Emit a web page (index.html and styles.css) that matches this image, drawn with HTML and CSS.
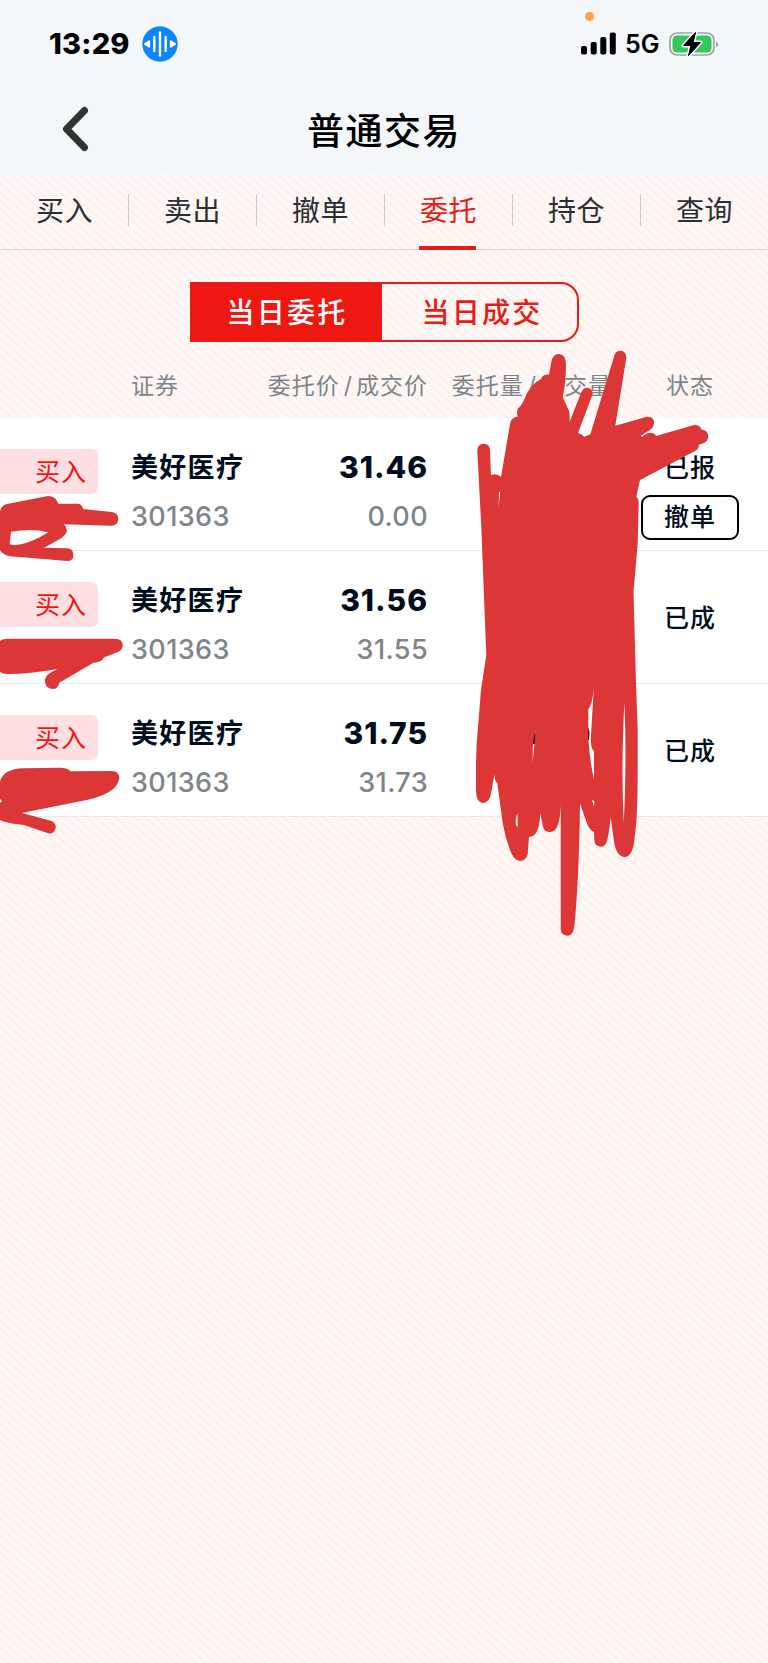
FILE: index.html
```html
<!DOCTYPE html>
<html lang="zh-CN">
<head>
<meta charset="UTF-8" />
<meta name="viewport" content="width=device-width, initial-scale=1" />
<title>普通交易</title>
<link rel="stylesheet" href="styles.css">
</head>
<body>

<div class="page">
  <header class="header">
    <div class="status-bar">
      <div class="status-left">
        <span class="time">13:29</span>
        <svg class="voice" viewBox="0 0 36 36">
          <circle cx="18" cy="18" r="17.7" fill="#0a84ff"/>
          <path d="M12.3 11v14M18 6.5v23M23.7 11v14" stroke="#fff" stroke-width="2.4" stroke-linecap="round"/>
          <path d="M2.8 18l4.500-2.800v5.600zM33.200 18l-4.500-2.800v5.600z" fill="#fff" stroke="#fff" stroke-width="1.800" stroke-linejoin="round"/>
        </svg>
      </div>
      <div class="status-right">
        <svg class="signal" viewBox="0 0 36 24">
          <rect x="0" y="14" width="6" height="8.500" rx="2"/>
          <rect x="9.700" y="10" width="6" height="12.500" rx="2"/>
          <rect x="19.300" y="5" width="6" height="17.500" rx="2"/>
          <rect x="28.800" y="0.500" width="6" height="22" rx="2"/>
        </svg>
        <span class="network">5G</span>
        <svg class="battery" viewBox="0 0 50 26">
          <rect x="1" y="2" width="44" height="22" rx="7" fill="none" stroke="#a0a4a8" stroke-width="1.700"/>
          <path d="M47 10.500q2.300 1 2.300 3t-2.300 3z" fill="#a0a4a8"/>
          <rect x="3.500" y="4.500" width="39" height="17" rx="4.500" fill="#34c759"/>
          <path d="M26.500 1.500L14.500 14.500h7.500L19.500 24.500L31.500 11.500h-7.500z" fill="#000" stroke="#f3f7fb" stroke-width="4" stroke-linejoin="round" paint-order="stroke"/>
          <path d="M26.500 1.500L14.500 14.500h7.500L19.500 24.500L31.500 11.500h-7.500z" fill="#000" stroke="#000" stroke-linejoin="round"/>
        </svg>
      </div>
      <i class="mic-dot"></i>
    </div>
    <div class="nav">
      <svg class="back" viewBox="0 0 28 46">
        <path d="M23.500 4.500L5.500 23l18 18.500" fill="none" stroke="#2d3338" stroke-width="7" stroke-linecap="round" stroke-linejoin="round"/>
      </svg>
      <h1>普通交易</h1>
    </div>
  </header>

  <nav class="tabs">
    <a class="tab">买入</a>
    <a class="tab">卖出</a>
    <a class="tab">撤单</a>
    <a class="tab active">委托</a>
    <a class="tab">持仓</a>
    <a class="tab">查询</a>
  </nav>

  <div class="switch">
    <button class="on">当日委托</button>
    <button>当日成交</button>
  </div>

  <div class="thead">
    <span class="c-name">证券</span>
    <span class="c-price">委托价<i>/</i>成交价</span>
    <span class="c-qty">委托量<i>/</i>成交量</span>
    <span class="c-state">状态</span>
  </div>

  <div class="list">
    <div class="row">
      <div class="c-side"><span class="badge">买入</span></div>
      <div class="c-name"><b>美好医疗</b><span>301363</span></div>
      <div class="c-price"><b>31.46</b><span>0.00</span></div>
      <div class="c-qty"></div>
      <div class="c-state pending"><span>已报</span><button class="cancel">撤单</button></div>
    </div>
    <div class="row">
      <div class="c-side"><span class="badge">买入</span></div>
      <div class="c-name"><b>美好医疗</b><span>301363</span></div>
      <div class="c-price"><b>31.56</b><span>31.55</span></div>
      <div class="c-qty"></div>
      <div class="c-state"><span>已成</span></div>
    </div>
    <div class="row">
      <div class="c-side"><span class="badge">买入</span></div>
      <div class="c-name"><b>美好医疗</b><span>301363</span></div>
      <div class="c-price"><b>31.75</b><span>31.73</span></div>
      <div class="c-qty"></div>
      <div class="c-state"><span>已成</span></div>
    </div>
  </div>

  <!-- hand-drawn marker over the private columns -->
  <svg class="marker" viewBox="0 0 768 1663">
    <path fill="#000d1c" d="M535.500 728L532 744h4zM588 727l1.500 5-.5 8h-1z"/>
    <path fill-rule="evenodd" d="M477.300 451Q477.500 443.700 483.700 443.700T490 451L491 475Q497 473 501 477L510 424Q511 417 518 416.500Q516 413 518 408.500Q522 405 524 400Q530 384 541 379Q543 374 549 374.700L551.300 362Q553 354 558.700 354Q566 354 566 365Q566 382 562.700 397L569 411Q570 415 569.500 422L581 393Q583 387.700 587 387.700Q592.700 388 592.700 394L578 433Q582 434 584.300 436.700L590.300 434.300L614 356.700Q615 350.700 620.300 350.700Q626.300 351 626.300 358L615.300 425.700L646 417Q653 416 654.300 422.300Q654 427 650 430L640.700 435.700L642 437Q646 432.700 651 432.700Q655 433 656 436L695 424.700Q700 425 701.500 429.500Q708 430 708.300 436.700Q708 443 699 444.500Q699 449 695 451L640 480L636.300 496.700Q638.700 498 638.700 503L637.700 543L633.500 591.700L636 683.300L637.700 730V773Q637.500 820 634.700 836.700Q633 856.700 624.700 857Q617 857 614.300 843.300L610.700 817.300Q609 834 606.700 842Q605 846.700 601 846.700Q594.300 846 594.300 840L594 832Q589 830 586 821L580 803.300Q579 880 574.300 926.700Q573 935.700 567.300 935.700Q561 935 560.700 929.300V805Q560 832 550.300 832Q544 832 543 826.700L540.300 813.300Q539 838 529 836.700L527.700 854Q526 861 520 861Q514 861 510 850Q505 837 502.700 823L497.300 783.300Q494 780 494.700 773.300L490.500 796Q488 803 483 803Q476 802 476 791V763L476.700 743L481 690L486.300 655L484 597L481.300 527Z
      M499 492L498.600 507L500.200 492Z
      M593.700 689.300Q592 706 588.300 709V738Q590 763 594 779.300V751Q591 749 590.700 740Z
      M624.300 703Q621 770 623.700 823Q626 780 625.300 730Z
      M535.300 728.300L533 743L532.500 763L534.500 743Z
      M517.500 813.300Q515 818 516 825L517.700 827.700Z
      M592 800L594 806.500L594.300 801Z"/>
    <path fill-rule="evenodd" d="M0 512Q1 505 7 504L48 496Q56 496 58.300 503.700H78.300Q82 504 83 509L111.700 512Q118.300 513 118.300 519T111.700 525.700L64 524.300Q67 527 66.700 532Q64 537 58 540L44 547.700L68 548.300Q73.300 549 73.300 555T67.700 561L10 556.300Q3 555 0 550Z
      M11 531.700Q31 528 48.300 532.300Q33 542 20 544.500Q14 545.500 9.700 544.300Z"/>
    <path d="M0 640.700Q3 638.700 7 638.700H115Q122.700 639 122.700 645.300Q122.700 650 118 652L104 657.500Q102 662 93 663L59.300 682.700Q58 689 52.700 689Q45 688 45 681Q45 676 50 673L57.300 669Q30 674 7 674Q3 674 0 671.700Z"/>
    <path d="M0 781.700Q3 769 23.300 768.300L60 767.700Q68 768 70.700 771.300L111.700 771Q119.300 771 119.300 778.300Q118 785 113 789.300Q105 796 86.700 800L21.700 813L51.700 821Q56 823 55.700 828Q54 834 49 833.500L24 825Q5 823 0 820V803L2 801L0 799Z"/>
  </svg>
</div>

</body>
</html>
```

FILE: styles.css
```css
* {
  box-sizing: border-box;
}
body {
  margin: 0;
  font-family: Inter, "Noto Sans CJK SC", sans-serif;
  color: #000d1c;
}
.page {
  position: relative;
  width: 768px;
  height: 1663px;
  overflow: hidden;
  background: #fff7f4 repeating-linear-gradient(41deg, #fff7f4 0, #fff7f4 4px, #f8eeec 5.2px, #fff7f4 6.5px);
}
.header {
  height: 174px;
  background: #f3f7fa;
}
.status-bar {
  position: relative;
  height: 88px;
  padding: 0 49px 0 49px;
  display: flex;
  justify-content: space-between;
  align-items: center;
  color: #000;
}
.status-left,
.status-right {
  display: flex;
  align-items: center;
}
.time {
  width: 93px;
  font-size: 29px;
  font-weight: 800;
  line-height: 36px;
  letter-spacing: 0.2px;
}
.voice {
  width: 36px;
  height: 36px;
}
.signal {
  width: 36px;
  height: 24px;
}
.network {
  width: 35px;
  margin: 0 9px 0 8px;
  font-size: 25px;
  font-weight: 600;
}
.battery {
  width: 50px;
  height: 26px;
}
.mic-dot {
  position: absolute;
  left: 585px;
  top: 12px;
  width: 9px;
  height: 9px;
  border-radius: 50%;
  background: #ff9f4f;
}
.nav {
  height: 82px;
  display: flex;
  align-items: center;
}
.back {
  width: 28px;
  height: 46px;
  margin-left: 61px;
}
.nav h1 {
  flex: 1;
  margin: -1px 89px 0 0;
  font-size: 37px;
  font-weight: 500;
  letter-spacing: 1.5px;
  text-align: center;
  color: #000;
}
.tabs {
  display: flex;
  height: 76px;
  border-bottom: 1px solid #d8d5d5;
}
.tab {
  flex: 1;
  display: flex;
  flex-direction: column;
  align-items: center;
  padding: 21px 0 0 1px;
  font-size: 28px;
  line-height: 32px;
  letter-spacing: 0.5px;
  color: #2b2e33;
}
.tab + .tab {
  background: linear-gradient(#c9c7c8, #c9c7c8) no-repeat 0 20px / 1px 32px;
}
.tab.active {
  color: #e51c17;
}
.tab.active::after {
  content: "";
  flex: none;
  width: 57px;
  height: 4px;
  margin: 19px 2px 0 0;
  background: #e51c17;
}
.switch {
  display: flex;
  width: 389px;
  height: 60px;
  margin: 32px auto 0 190px;
  border: 2px solid #ea1a15;
  border-radius: 0 18px 18px 0;
}
.switch button {
  flex: 1;
  padding: 3px 0 0 5px;
  border: none;
  background: none;
  font: 500 28px/53px Inter, "Noto Sans CJK SC", sans-serif;
  letter-spacing: 2.2px;
  color: #ea1a15;
}
.switch .on {
  flex: 0 0 190px;
  padding-left: 0;
  background: #ef1711;
  color: #fff;
}
.thead {
  display: flex;
  align-items: center;
  height: 76px;
  padding: 7px 0 0 131px;
  font-size: 23px;
  letter-spacing: 1px;
  color: #7d858b;
}
.thead i {
  margin: 0 3px 0 4px;
  font-style: normal;
}
.c-side {
  width: 131px;
}
.c-name {
  width: 130px;
}
.c-price {
  width: 167px;
  text-align: right;
}
.c-qty {
  width: 184px;
  text-align: right;
}
.c-state {
  width: 156px;
  text-align: center;
}
.list {
  background: #fff;
}
.row {
  display: flex;
  height: 133px;
  border-bottom: 1px solid #e6e8ea;
}
.badge {
  display: block;
  width: 98px;
  height: 45px;
  margin-top: 31px;
  padding-left: 35px;
  border-radius: 0 6px 6px 0;
  background: #ffdfe1;
  color: #f01510;
  font-size: 25px;
  line-height: 46px;
  letter-spacing: 1px;
}
.row .c-name,
.row .c-price {
  display: flex;
  flex-direction: column;
  padding-top: 25px;
  font-size: 27px;
}
.row b,
.row .c-name span,
.row .c-price span {
  height: 49px;
  line-height: 49px;
  white-space: nowrap;
}
.row b {
  letter-spacing: 1.3px;
}
.row .c-price b {
  font-size: 30px;
  font-weight: 800;
  letter-spacing: 1px;
}
.row .c-name span,
.row .c-price span {
  font-weight: 500;
  letter-spacing: 0.4px;
  color: #7d858b;
}
.row .c-state {
  display: flex;
  flex-direction: column;
  align-items: center;
  justify-content: center;
  padding-top: 2px;
  font-size: 25px;
  font-weight: 500;
  line-height: 40px;
  letter-spacing: 1px;
}
.row .pending {
  justify-content: flex-start;
  padding-top: 30px;
}
.cancel {
  width: 98px;
  height: 45px;
  margin-top: 7px;
  padding: 0;
  border: 2px solid #000;
  border-radius: 9px;
  background: #fff;
  color: #000d1c;
  font: 500 25px/41px Inter, "Noto Sans CJK SC", sans-serif;
  letter-spacing: 1px;
}
.marker {
  position: absolute;
  left: 0;
  top: 0;
  width: 768px;
  height: 1663px;
  fill: #dc3636;
}
```
